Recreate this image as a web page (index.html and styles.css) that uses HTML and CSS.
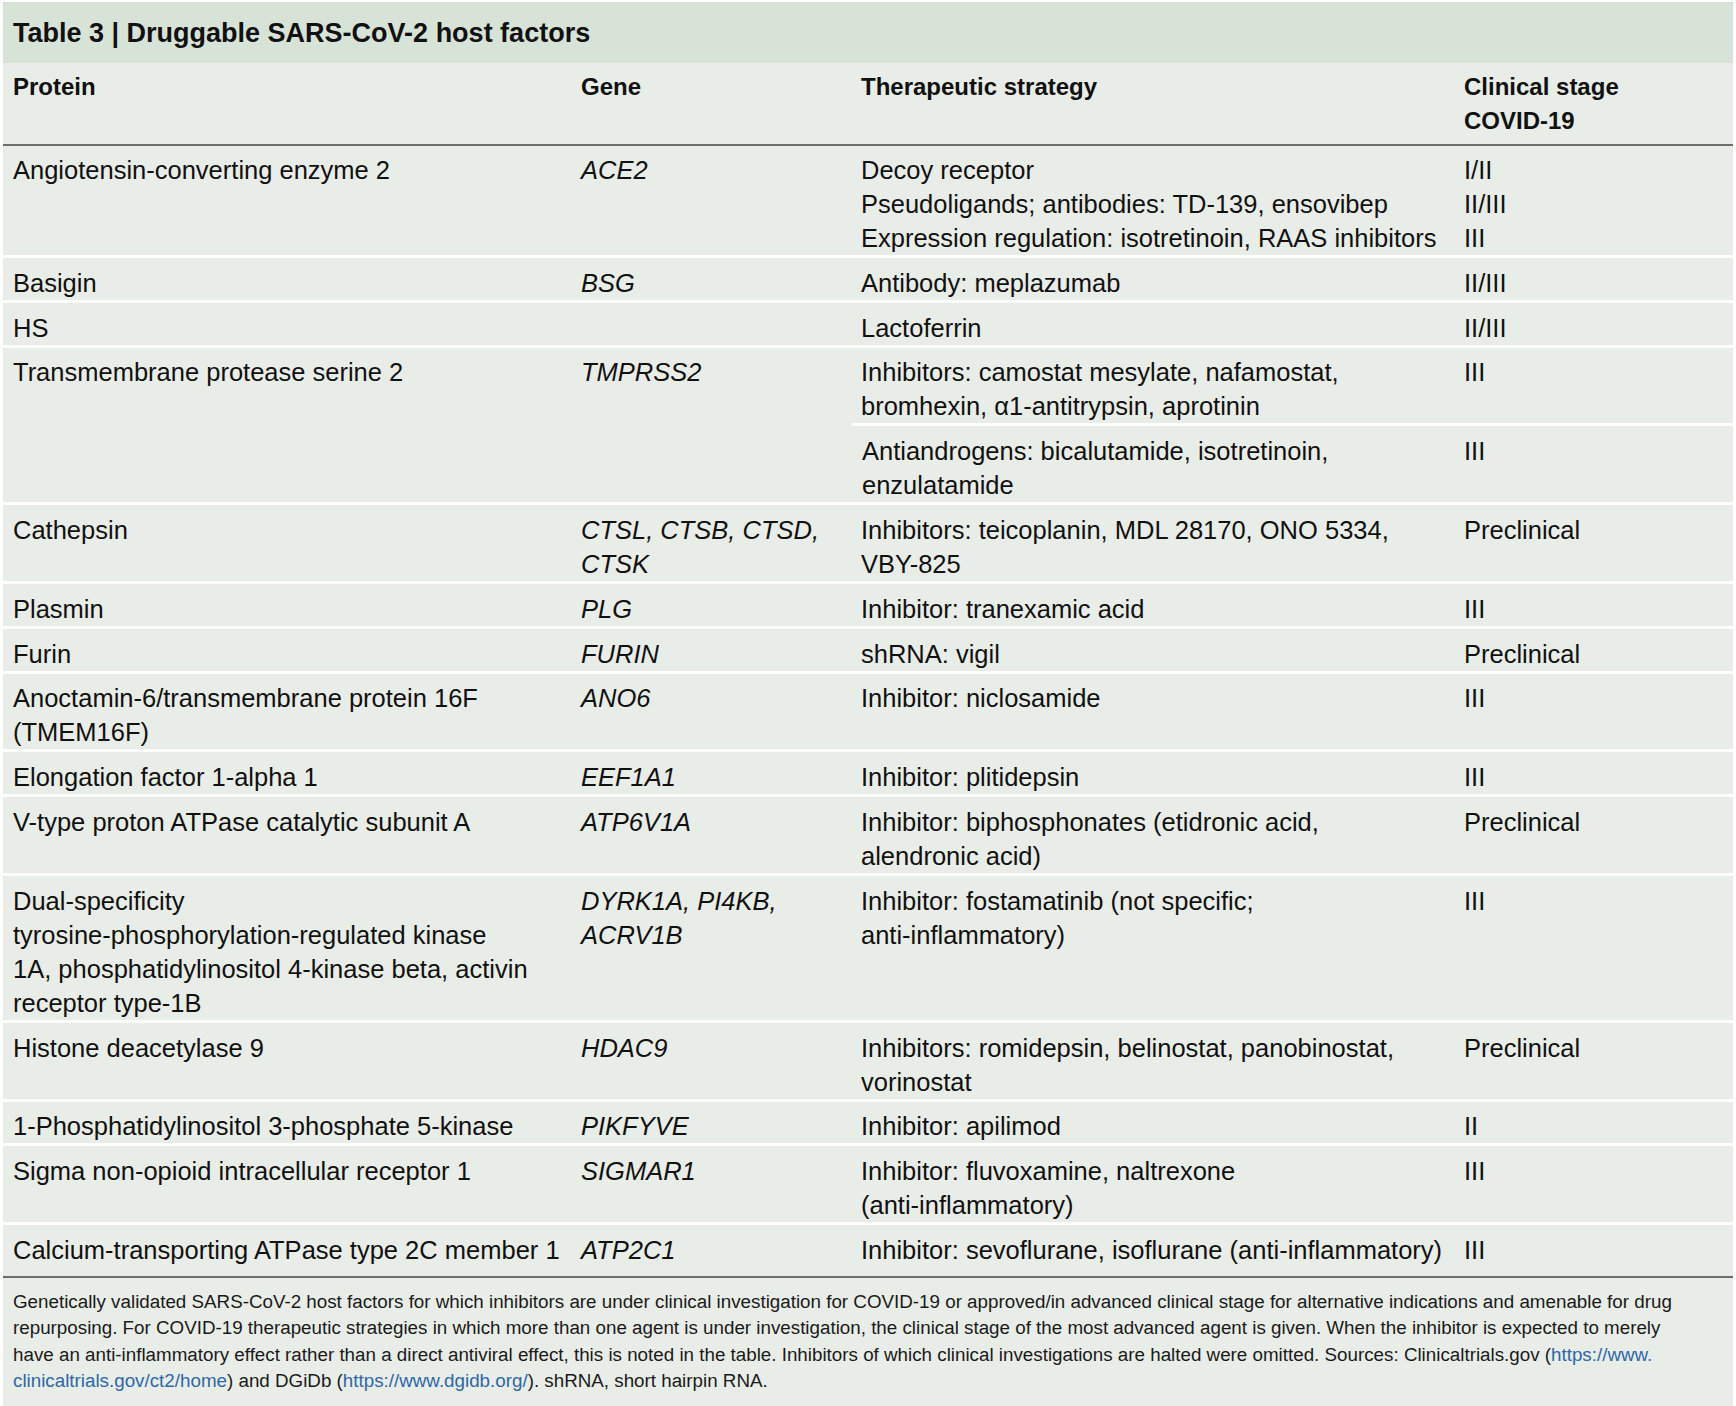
FILE: index.html
```html
<!DOCTYPE html>
<html lang="en">
<head>
<meta charset="utf-8">
<title>Table 3 | Druggable SARS-CoV-2 host factors</title>
<link rel="stylesheet" href="styles.css">
</head>
<body>
<div class="sheet">
  <div class="title">Table 3 | Druggable SARS-CoV-2 host factors</div>
  <table class="data">
    <colgroup>
      <col class="c1"><col class="c2"><col class="c3"><col class="c4">
    </colgroup>
    <thead>
      <tr>
        <th>Protein</th>
        <th>Gene</th>
        <th>Therapeutic strategy</th>
        <th>Clinical stage<br>COVID-19</th>
      </tr>
    </thead>
    <tbody>
      <tr>
        <td>Angiotensin-converting enzyme 2</td>
        <td class="gene">ACE2</td>
        <td>Decoy receptor<br>Pseudoligands; antibodies: TD-139, ensovibep<br>Expression regulation: isotretinoin, RAAS inhibitors</td>
        <td>I/II<br>II/III<br>III</td>
      </tr>
      <tr>
        <td>Basigin</td>
        <td class="gene">BSG</td>
        <td>Antibody: meplazumab</td>
        <td>II/III</td>
      </tr>
      <tr>
        <td>HS</td>
        <td class="gene"></td>
        <td>Lactoferrin</td>
        <td>II/III</td>
      </tr>
      <tr>
        <td rowspan="2">Transmembrane protease serine 2</td>
        <td rowspan="2" class="gene">TMPRSS2</td>
        <td>Inhibitors: camostat mesylate, nafamostat,<br>bromhexin, α1-antitrypsin, aprotinin</td>
        <td>III</td>
      </tr>
      <tr>
        <td>Antiandrogens: bicalutamide, isotretinoin,<br>enzulatamide</td>
        <td>III</td>
      </tr>
      <tr>
        <td>Cathepsin</td>
        <td class="gene">CTSL, CTSB, CTSD,<br>CTSK</td>
        <td>Inhibitors: teicoplanin, MDL 28170, ONO 5334,<br>VBY-825</td>
        <td>Preclinical</td>
      </tr>
      <tr>
        <td>Plasmin</td>
        <td class="gene">PLG</td>
        <td>Inhibitor: tranexamic acid</td>
        <td>III</td>
      </tr>
      <tr>
        <td>Furin</td>
        <td class="gene">FURIN</td>
        <td>shRNA: vigil</td>
        <td>Preclinical</td>
      </tr>
      <tr>
        <td>Anoctamin-6/transmembrane protein 16F<br>(TMEM16F)</td>
        <td class="gene">ANO6</td>
        <td>Inhibitor: niclosamide</td>
        <td>III</td>
      </tr>
      <tr>
        <td>Elongation factor 1-alpha 1</td>
        <td class="gene">EEF1A1</td>
        <td>Inhibitor: plitidepsin</td>
        <td>III</td>
      </tr>
      <tr>
        <td>V-type proton ATPase catalytic subunit A</td>
        <td class="gene">ATP6V1A</td>
        <td>Inhibitor: biphosphonates (etidronic acid,<br>alendronic acid)</td>
        <td>Preclinical</td>
      </tr>
      <tr>
        <td>Dual-specificity<br>tyrosine-phosphorylation-regulated kinase<br>1A, phosphatidylinositol 4-kinase beta, activin<br>receptor type-1B</td>
        <td class="gene">DYRK1A, PI4KB,<br>ACRV1B</td>
        <td>Inhibitor: fostamatinib (not specific;<br>anti-inflammatory)</td>
        <td>III</td>
      </tr>
      <tr>
        <td>Histone deacetylase 9</td>
        <td class="gene">HDAC9</td>
        <td>Inhibitors: romidepsin, belinostat, panobinostat,<br>vorinostat</td>
        <td>Preclinical</td>
      </tr>
      <tr>
        <td>1-Phosphatidylinositol 3-phosphate 5-kinase</td>
        <td class="gene">PIKFYVE</td>
        <td>Inhibitor: apilimod</td>
        <td>II</td>
      </tr>
      <tr>
        <td>Sigma non-opioid intracellular receptor 1</td>
        <td class="gene">SIGMAR1</td>
        <td>Inhibitor: fluvoxamine, naltrexone<br>(anti-inflammatory)</td>
        <td>III</td>
      </tr>
      <tr class="last">
        <td>Calcium-transporting ATPase type 2C member 1</td>
        <td class="gene">ATP2C1</td>
        <td>Inhibitor: sevoflurane, isoflurane (anti-inflammatory)</td>
        <td>III</td>
      </tr>
    </tbody>
  </table>
  <div class="note">
    <span class="ln">Genetically validated SARS-CoV-2 host factors for which inhibitors are under clinical investigation for COVID-19 or approved/in advanced clinical stage for alternative indications and amenable for drug</span>
    <span class="ln">repurposing. For COVID-19 therapeutic strategies in which more than one agent is under investigation, the clinical stage of the most advanced agent is given. When the inhibitor is expected to merely</span>
    <span class="ln">have an anti-inflammatory effect rather than a direct antiviral effect, this is noted in the table. Inhibitors of which clinical investigations are halted were omitted. Sources: Clinicaltrials.gov (<a class="link" href="#">https://www.</a></span>
    <span class="ln"><a class="link" href="#">clinicaltrials.gov/ct2/home</a>) and DGiDb (<a class="link" href="#">https://www.dgidb.org/</a>). shRNA, short hairpin RNA.</span>
  </div>
</div>
</body>
</html>
```

FILE: styles.css
```css
html, body {
  margin: 0;
  padding: 0;
  background: #ffffff;
}
body {
  padding: 2px 3px 0 3px;
  font-family: "Liberation Sans", Arial, sans-serif;
  color: #111111;
}
.sheet {
  background: #e8ede7;
  min-height: calc(100vh - 2px);
  display: flex;
  flex-direction: column;
}
.title {
  background: #d8e3d7;
  height: 61px;
  box-sizing: border-box;
  padding: 16px 10px 0 10px;
  font-size: 27px;
  font-weight: bold;
  line-height: 30px;
  white-space: nowrap;
}
.data {
  width: 100%;
  border-collapse: collapse;
  table-layout: fixed;
  font-size: 25.5px;
  line-height: 34px;
}
.c1 { width: 568px; }
.c2 { width: 281px; }
.c3 { width: 602px; }
.c4 { width: auto; }
.data th {
  text-align: left;
  vertical-align: top;
  font-weight: bold;
  font-size: 24px;
  padding: 7px 10px 6px 10px;
  border-bottom: 2px solid #6e6e6e;
  white-space: nowrap;
}
.data th:nth-child(3), .data td:nth-child(3) { padding-left: 9px; }
.data td {
  vertical-align: top;
  padding: 7.8px 10px 0 10px;
  border-top: 3px solid #ffffff;
  white-space: nowrap;
}
.data tbody tr:first-child td {
  border-top: none;
  padding-top: 7px;
}
.data tbody tr.last td {
  padding-bottom: 9px;
}
.gene {
  font-style: italic;
}
.note {
  flex: 1;
  border-top: 2px solid #6e6e6e;
  padding: 11px 10px 10px 10px;
  font-size: 18.8px;
  line-height: 26.5px;
  color: #1a1a1a;
}
.ln {
  display: block;
  white-space: nowrap;
}
.link {
  color: #2f67a8;
  text-decoration: none;
}
```
